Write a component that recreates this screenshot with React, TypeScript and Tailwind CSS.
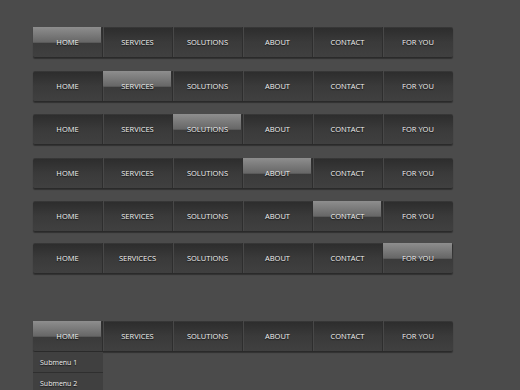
import React from "react";

const items = ["HOME", "SERVICES", "SOLUTIONS", "ABOUT", "CONTACT", "FOR YOU"];

const bars: { active: number; mt: string; labels?: string[] }[] = [
  { active: 0, mt: "mt-[27px]" },
  { active: 1, mt: "mt-[13px]" },
  { active: 2, mt: "mt-[12px]" },
  { active: 3, mt: "mt-[13px]" },
  { active: 4, mt: "mt-[12px]" },
  { active: 5, mt: "mt-[11px]", labels: ["HOME", "SERVICECS", "SOLUTIONS", "ABOUT", "CONTACT", "FOR YOU"] },
];

const NavBar = ({ active, labels = items }: { active: number; labels?: string[] }) => (
  <div className="flex w-[420px] h-[31px] rounded-[2px] bg-gradient-to-b from-[#2c2c2c] via-[#3a3a3a] to-[#404040] border-b border-[#2a2a2a] shadow-[0_1px_1px_rgba(0,0,0,0.35),inset_0_1px_0_rgba(255,255,255,0.05)]">
    {labels.map((label, i) => (
      <div
        key={label + i}
        className={
          "relative w-[70px] h-full flex items-center justify-center pt-[1px] " +
          (i < labels.length - 1 ? "border-r border-[#2e2e2e] shadow-[1px_0_0_#484848]" : "")
        }
      >
        {i === active && (
          <div className="absolute left-0 right-[1px] top-0 h-[16px] bg-gradient-to-b from-[#8e8e8e] to-[#676767] border-b border-[#5a5a5a]" />
        )}
        <span className="relative text-[7.5px] text-[#f2f2f2] [text-shadow:0_1px_1px_#111] [font-family:'Open_Sans',sans-serif]">
          {label}
        </span>
      </div>
    ))}
  </div>
);

export default function App() {
  return (
    <div className="w-[520px] h-[390px] overflow-hidden bg-[#4b4b4b] [font-family:'Open_Sans',sans-serif]">
      <div className="flex flex-col pl-[33px]">
        {bars.map((b, i) => (
          <div key={i} className={b.mt}>
            <NavBar active={b.active} labels={b.labels} />
          </div>
        ))}
        <div className="mt-[47px]">
          <NavBar active={0} />
          <div className="w-[70px] flex flex-col">
            {["Submenu 1", "Submenu 2"].map((s) => (
              <div
                key={s}
                className="h-[21px] flex items-center pl-[7px] pt-[2px] bg-[#404040] border-b border-[#2f2f2f] shadow-[0_1px_0_#4a4a4a] text-[7px] text-[#f0f0f0] [text-shadow:0_1px_1px_#111]"
              >
                {s}
              </div>
            ))}
          </div>
        </div>
      </div>
    </div>
  );
}
